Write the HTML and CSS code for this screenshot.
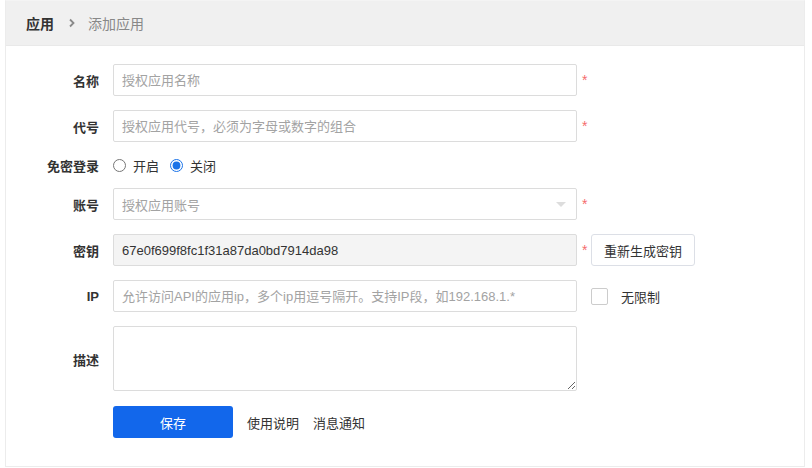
FILE: index.html
```html
<!DOCTYPE html>
<html lang="zh-CN">
<head>
    <meta charset="UTF-8">
    <meta name="viewport" content="width=device-width, initial-scale=1.0">
    <title>添加应用</title>
    <link rel="stylesheet" href="styles.css">
</head>
<body>
    <div class="panel">
        <div class="crumbs">
            <span class="crumb-root">应用</span>
            <svg class="crumb-sep" width="8" height="10" viewBox="0 0 8 10">
                <path d="M2 1.5 L5.5 5 L2 8.5" fill="none" stroke="#8a8a8a" stroke-width="1.8"/>
            </svg>
            <span class="crumb-current">添加应用</span>
        </div>

        <form class="form">
            <div class="row">
                <label class="label">名称</label>
                <input class="field" type="text" placeholder="授权应用名称">
                <span class="req">*</span>
            </div>
            <div class="row">
                <label class="label">代号</label>
                <input class="field" type="text" placeholder="授权应用代号，必须为字母或数字的组合">
                <span class="req">*</span>
            </div>
            <div class="row row-radio">
                <label class="label">免密登录</label>
                <label class="radio"><input type="radio" name="nopass"> 开启</label>
                <label class="radio"><input type="radio" name="nopass" checked> 关闭</label>
            </div>
            <div class="row">
                <label class="label">账号</label>
                <div class="field select">
                    <span class="placeholder">授权应用账号</span>
                    <span class="caret"></span>
                </div>
                <span class="req">*</span>
            </div>
            <div class="row">
                <label class="label">密钥</label>
                <input class="field readonly" type="text" value="67e0f699f8fc1f31a87da0bd7914da98" readonly>
                <span class="req">*</span>
                <button type="button" class="btn">重新生成密钥</button>
            </div>
            <div class="row">
                <label class="label">IP</label>
                <input class="field" type="text" placeholder="允许访问API的应用ip，多个ip用逗号隔开。支持IP段，如192.168.1.*">
                <span class="req"></span>
                <label class="check"><span class="box"></span>无限制</label>
            </div>
            <div class="row">
                <label class="label">描述</label>
                <textarea class="field area"></textarea>
            </div>
            <div class="row row-actions">
                <span class="label"></span>
                <button type="button" class="btn-primary">保存</button>
                <a class="link">使用说明</a>
                <a class="link">消息通知</a>
            </div>
        </form>
    </div>
</body>
</html>
```

FILE: styles.css
```css
* {
    box-sizing: border-box;
}

body {
    margin: 0;
    padding-left: 5px;
    font-family: "Liberation Sans", "Noto Sans CJK SC", sans-serif;
    font-size: 13px;
    color: #333;
    background-color: #fff;
}

.panel {
    width: 800px;
    height: 467px;
    border: 1px solid #ececec;
    border-top-color: #f4f4f4;
}

.crumbs {
    display: flex;
    align-items: center;
    height: 45px;
    padding-left: 20px;
    background-color: #f0f0f0;
    border-bottom: 1px solid #e9e9e9;
    font-size: 14px;
}

.crumb-root {
    font-weight: 700;
    color: #333;
}

.crumb-sep {
    margin: 0 12px 0 14px;
}

.crumb-current {
    color: #888;
}

.form {
    padding-top: 18px;
}

.row {
    display: flex;
    align-items: center;
    margin-bottom: 14px;
}

.row-radio {
    height: 18px;
}

.label {
    width: 93px;
    margin-right: 14px;
    text-align: right;
    font-weight: 700;
    color: #333;
}

.field {
    width: 464px;
    height: 32px;
    padding: 0 8px;
    border: 1px solid #dcdcdc;
    border-radius: 2px;
    font-family: inherit;
    font-size: 13px;
    color: #333;
    background-color: #fff;
    outline: none;
}

.field::placeholder,
.placeholder {
    color: #a3a3a3;
}

.readonly {
    background-color: #f4f4f4;
}

.select {
    display: flex;
    align-items: center;
    justify-content: space-between;
    padding-right: 10px;
}

.caret {
    width: 0;
    height: 0;
    border-left: 5px solid transparent;
    border-right: 5px solid transparent;
    border-top: 5px solid #ddd;
}

.area {
    height: 65px;
    padding: 6px 8px;
    resize: vertical;
    margin-bottom: 1px;
}

.req {
    width: 14px;
    padding-left: 5px;
    color: #f56c6c;
    font-size: 14px;
    line-height: 1;
}

.radio {
    display: flex;
    align-items: center;
    margin-right: 11px;
    color: #333;
}

.radio input {
    width: 13px;
    height: 13px;
    margin: 0 7px 0 0;
    accent-color: #1a73e8;
}

.btn {
    height: 32px;
    padding: 0 12px;
    border: 1px solid #dcdfe6;
    border-radius: 3px;
    background-color: #fff;
    font-family: inherit;
    font-size: 13px;
    color: #333;
}

.check {
    display: flex;
    align-items: center;
    color: #333;
}

.box {
    width: 17px;
    height: 17px;
    margin-right: 13px;
    border: 1px solid #ccc;
    border-radius: 2px;
}

.btn-primary {
    width: 120px;
    height: 32px;
    margin-right: 14px;
    border: none;
    border-radius: 3px;
    background-color: #1267eb;
    color: #fff;
    font-family: inherit;
    font-size: 13px;
}

.link {
    margin-right: 14px;
    color: #333;
    cursor: pointer;
}
```
